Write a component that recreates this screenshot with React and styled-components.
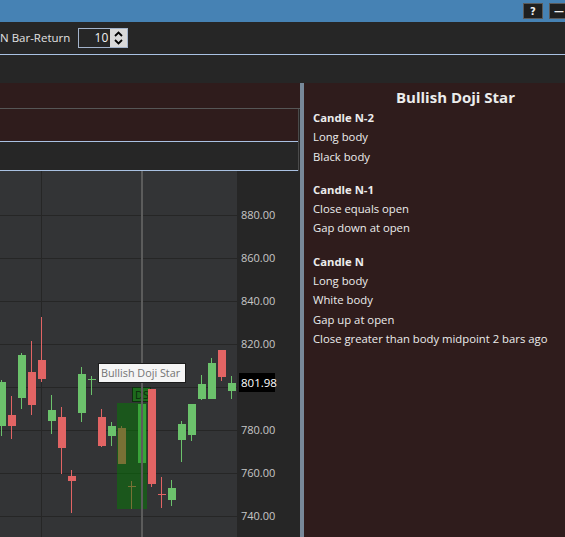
import React from 'react';
import styled, { createGlobalStyle } from 'styled-components';

const GlobalStyle = createGlobalStyle`
  html, body {
    margin: 0;
    padding: 0;
    background: #262626;
    overflow: hidden;
  }
  body {
    font-family: "Open Sans", "Noto Sans", sans-serif;
    color: #e6e6e6;
  }
`;

// chart starts at page y 171, candles are noted in page coords
const TOP = 171;
const GREEN = '#6cc26c';
const RED = '#e26464';

const candles = [
  { x: 2, o: 426, c: 382, h: 380, l: 436 },
  { x: 12, o: 415, c: 426, h: 396, l: 439 },
  { x: 22, o: 398, c: 355, h: 353, l: 409 },
  { x: 32, o: 372, c: 405, h: 341, l: 415 },
  { x: 42, o: 360, c: 379, h: 317, l: 382 },
  { x: 52, o: 421, c: 410, h: 395, l: 434 },
  { x: 62, o: 417, c: 448, h: 407, l: 474 },
  { x: 72, o: 476, c: 481, h: 470, l: 513 },
  { x: 82, o: 413, c: 374, h: 367, l: 422 },
  { x: 92, o: 379, c: 379, h: 376, l: 395, up: true },
  { x: 102, o: 417, c: 446, h: 409, l: 447 },
  { x: 112, o: 436, c: 426, h: 422, l: 446 },
  { x: 122, o: 428, c: 464, h: 426, l: 464 },
  { x: 132, o: 486, c: 486, h: 481, l: 509 },
  { x: 142, o: 463, c: 404, h: 404, l: 472 },
  { x: 152, o: 389, c: 484, h: 389, l: 487 },
  { x: 162, o: 494, c: 494, h: 477, l: 508 },
  { x: 172, o: 500, c: 488, h: 480, l: 506 },
  { x: 182, o: 440, c: 424, h: 421, l: 462 },
  { x: 192, o: 435, c: 404, h: 404, l: 441 },
  { x: 202, o: 399, c: 384, h: 375, l: 400 },
  { x: 212, o: 399, c: 363, h: 358, l: 399 },
  { x: 222, o: 350, c: 377, h: 350, l: 381 },
  { x: 232, o: 391, c: 383, h: 376, l: 399 },
];

const priceLines = [
  { y: 215, label: '880.00' },
  { y: 258, label: '860.00' },
  { y: 301, label: '840.00' },
  { y: 344, label: '820.00' },
  { y: 387, label: '' },
  { y: 430, label: '780.00' },
  { y: 473, label: '760.00' },
  { y: 516, label: '740.00' },
];

const Page = styled.div`
  width: 565px;
  height: 537px;
  display: flex;
  flex-direction: column;
  overflow: hidden;
`;

const TitleBar = styled.div`
  height: 22px;
  background: #4682b4;
  display: flex;
  justify-content: flex-end;
  align-items: flex-start;
  gap: 6px;
  padding-top: 3px;
  box-sizing: border-box;
  margin-right: -4px;
`;

const WinButton = styled.div`
  width: 20px;
  height: 16px;
  box-sizing: border-box;
  background: #1f1f1f;
  border: 1px solid #5a5a5a;
  color: #f0f0f0;
  font-family: "DejaVu Sans", sans-serif;
  font-size: 10px;
  font-weight: bold;
  display: flex;
  align-items: center;
  justify-content: center;
`;

const Toolbar = styled.div`
  height: 33px;
  box-sizing: border-box;
  border-bottom: 1px solid #a9c1e2;
  display: flex;
  align-items: center;
  gap: 8px;
  font-size: 11.5px;
  color: #e2e2e2;
  padding-bottom: 1px;
`;

const SpinBox = styled.div`
  width: 50px;
  height: 20px;
  box-sizing: border-box;
  border: 1px solid #a3b3cb;
  display: flex;
  margin-top: 1px;
`;

const SpinValue = styled.div`
  flex: 1;
  text-align: right;
  padding-right: 2px;
  font-size: 12px;
  line-height: 18px;
  color: #f2f2f2;
`;

const SpinButtons = styled.div`
  width: 17px;
  background: #d9d9d9;
  display: flex;
  flex-direction: column;
  justify-content: space-around;
  align-items: center;
  padding: 1px 0;
`;

const EmptyRow = styled.div`
  height: ${p => p.$h}px;
  flex-shrink: 0;
  background: ${p => p.$bg || '#262626'};
  border-bottom: ${p => p.$line ? `1px solid ${p.$line}` : 'none'};
`;

const Main = styled.div`
  flex: 1;
  display: flex;
  min-height: 0;
`;

const LeftColumn = styled.div`
  width: 300px;
  display: flex;
  flex-direction: column;
`;

const Framed = styled.div`
  width: 298px;
  border-right: 1px solid #4a4a4a;
  display: flex;
  flex-direction: column;
`;

const Splitter = styled.div`
  width: 4px;
  background: #778899;
`;

const InfoPanel = styled.div`
  flex: 1;
  background: #2f1c1c;
  padding: 3px 0 0 9px;
  font-size: 11.3px;
  line-height: 19.3px;
  color: #ececec;
  white-space: nowrap;
`;

const InfoTitle = styled.div`
  font-size: 15px;
  font-weight: 700;
  line-height: 22px;
  padding-left: 83px;
`;

const Group = styled.div`
  margin-top: ${p => p.$first ? 0 : 14}px;
`;

const GroupHead = styled.div`
  font-weight: 700;
`;

const ChartWrap = styled.div`
  position: relative;
  flex: 1;
  background: #262626;
`;

const Tooltip = styled.div`
  position: absolute;
  left: 98px;
  top: 192px;
  width: 88px;
  height: 20px;
  box-sizing: border-box;
  background: #f5f5f5;
  border: 1px solid #1c1c1c;
  color: #737373;
  font-size: 10.8px;
  line-height: 18px;
  padding-left: 2px;
  white-space: nowrap;
  overflow: hidden;
`;

const Arrow = ({ down }) => (
  <svg width="9" height="6" viewBox="0 0 9 6">
    <polyline
      points={down ? '1,1 4.5,4.5 8,1' : '1,5 4.5,1.5 8,5'}
      fill="none"
      stroke="#000"
      strokeWidth="1.8"
    />
  </svg>
);

const Candle = ({ c }) => {
  const top = Math.min(c.o, c.c) - TOP;
  const bot = Math.max(c.o, c.c) - TOP;
  const doji = bot - top < 1;
  const color = c.up || c.c < c.o ? GREEN : RED;
  return (
    <g fill={color}>
      <rect x={c.x - 1} y={c.h - TOP} width={1} height={c.l - c.h} />
      {doji
        ? <rect x={c.x - 4} y={top} width={8} height={1} />
        : <rect x={c.x - 4} y={top} width={8} height={bot - top} />}
    </g>
  );
};

const Chart = () => (
  <svg width="300" height="366" viewBox="0 0 300 366" style={{ display: 'block' }}>
    <rect x="0" y="0" width="237" height="366" fill="#333436" />
    {priceLines.map(p => (
      <rect key={p.y} x="0" y={p.y - TOP} width="237" height="1" fill="#262626" />
    ))}
    <rect x="41" y="0" width="1" height="366" fill="#262626" />
    {candles.map(c => <Candle key={c.x} c={c} />)}
    <rect x="117" y={403 - TOP} width="30" height="106" fill="rgb(0,128,0)" fillOpacity="0.47" />
    <rect x="132.5" y={387.5 - TOP} width="18" height="14" fill="#1d6b1d" stroke="#0e2e0e" />
    <text x="135" y={399 - TOP} fontSize="11" fill="#0c280c" fontFamily="Open Sans, sans-serif">DS</text>
    <Candle c={candles[15]} />
    <rect x="141" y="0" width="2" height="366" fill="#5c5c5c" />
    {priceLines.filter(p => p.label).map(p => (
      <text
        key={p.label}
        x="241"
        y={p.y - TOP + 4}
        fontSize="11"
        fill="#c6c6c6"
        fontFamily="Open Sans, sans-serif"
      >
        {p.label}
      </text>
    ))}
    <rect x="239" y={373 - TOP} width="36" height="19" fill="#000" />
    <text x="241" y={386.5 - TOP} fontSize="11.5" fill="#fff" fontFamily="Open Sans, sans-serif">801.98</text>
  </svg>
);

const App = () => (
  <Page>
    <GlobalStyle />
    <TitleBar>
      <WinButton>?</WinButton>
      <WinButton>—</WinButton>
    </TitleBar>
    <Toolbar>
      <span>N Bar-Return</span>
      <SpinBox>
        <SpinValue>10</SpinValue>
        <SpinButtons>
          <Arrow />
          <Arrow down />
        </SpinButtons>
      </SpinBox>
    </Toolbar>
    <EmptyRow $h={28} />
    <Main>
      <LeftColumn>
        <EmptyRow $h={25} $bg="#2f1c1c" $line="#565656" />
        <Framed>
          <EmptyRow $h={32} $bg="#2f1c1c" $line="#a9c1e2" />
          <EmptyRow $h={28} $line="#a9c1e2" />
        </Framed>
        <ChartWrap>
          <Chart />
          <Tooltip>Bullish Doji Star</Tooltip>
        </ChartWrap>
      </LeftColumn>
      <Splitter />
      <InfoPanel>
        <InfoTitle>Bullish Doji Star</InfoTitle>
        <Group $first>
          <GroupHead>Candle N-2</GroupHead>
          <div>Long body</div>
          <div>Black body</div>
        </Group>
        <Group>
          <GroupHead>Candle N-1</GroupHead>
          <div>Close equals open</div>
          <div>Gap down at open</div>
        </Group>
        <Group>
          <GroupHead>Candle N</GroupHead>
          <div>Long body</div>
          <div>White body</div>
          <div>Gap up at open</div>
          <div>Close greater than body midpoint 2 bars ago</div>
        </Group>
      </InfoPanel>
    </Main>
  </Page>
);

export default App;
